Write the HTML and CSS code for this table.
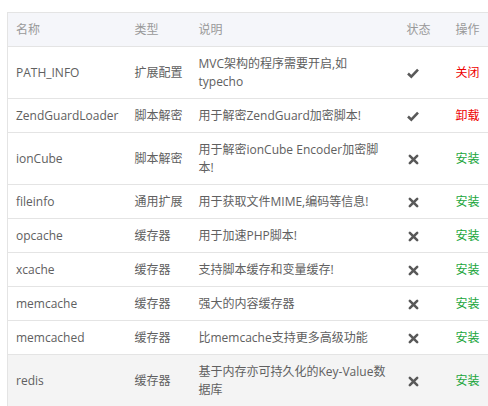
FILE: index.html
```html
<!DOCTYPE html>
<html>
<head>
<meta charset="utf-8">
<link rel="stylesheet" href="styles.css">
</head>
<body>
<div class="wrap">
<table class="tbl">
<colgroup>
<col class="c-name"><col class="c-type"><col class="c-desc"><col class="c-stat"><col class="c-op">
</colgroup>
<thead>
<tr><th>名称</th><th>类型</th><th>说明</th><th>状态</th><th>操作</th></tr>
</thead>
<tbody>
<tr><td>PATH_INFO</td><td>扩展配置</td><td>MVC架构的程序需要开启,如typecho</td><td><svg class="ico" viewBox="0 0 12 12"><path d="M1 6.5 L4.3 9.6 L11 2.6" /></svg></td><td><a class="red">关闭</a></td></tr>
<tr><td>ZendGuardLoader</td><td>脚本解密</td><td>用于解密ZendGuard加密脚本!</td><td><svg class="ico" viewBox="0 0 12 12"><path d="M1 6.5 L4.3 9.6 L11 2.6" /></svg></td><td><a class="red">卸载</a></td></tr>
<tr><td>ionCube</td><td>脚本解密</td><td>用于解密ionCube Encoder加密脚本!</td><td><svg class="ico x" viewBox="0 0 12 12"><path d="M2 2 L10 10 M10 2 L2 10" /></svg></td><td><a class="green">安装</a></td></tr>
<tr><td>fileinfo</td><td>通用扩展</td><td>用于获取文件MIME,编码等信息!</td><td><svg class="ico x" viewBox="0 0 12 12"><path d="M2 2 L10 10 M10 2 L2 10" /></svg></td><td><a class="green">安装</a></td></tr>
<tr><td>opcache</td><td>缓存器</td><td>用于加速PHP脚本!</td><td><svg class="ico x" viewBox="0 0 12 12"><path d="M2 2 L10 10 M10 2 L2 10" /></svg></td><td><a class="green">安装</a></td></tr>
<tr><td>xcache</td><td>缓存器</td><td>支持脚本缓存和变量缓存!</td><td><svg class="ico x" viewBox="0 0 12 12"><path d="M2 2 L10 10 M10 2 L2 10" /></svg></td><td><a class="green">安装</a></td></tr>
<tr><td>memcache</td><td>缓存器</td><td>强大的内容缓存器</td><td><svg class="ico x" viewBox="0 0 12 12"><path d="M2 2 L10 10 M10 2 L2 10" /></svg></td><td><a class="green">安装</a></td></tr>
<tr><td>memcached</td><td>缓存器</td><td>比memcache支持更多高级功能</td><td><svg class="ico x" viewBox="0 0 12 12"><path d="M2 2 L10 10 M10 2 L2 10" /></svg></td><td><a class="green">安装</a></td></tr>
<tr class="hover"><td>redis</td><td>缓存器</td><td>基于内存亦可持久化的Key-Value数据库</td><td><svg class="ico x" viewBox="0 0 12 12"><path d="M2 2 L10 10 M10 2 L2 10" /></svg></td><td><a class="green">安装</a></td></tr>
</tbody>
</table>
</div>
</body>
</html>
```
FILE: styles.css
```css
html, body {
  margin: 0;
  padding: 0;
  background: #fff;
  overflow: hidden;
}
.wrap {
  padding: 12px 0 0 7px;
  width: 540px;
}
.tbl {
  border-collapse: collapse;
  table-layout: fixed;
  width: 500px;
  font-family: "Open Sans", "Noto Sans CJK SC", sans-serif;
  font-size: 12px;
  line-height: 18px;
  color: #606060;
  border: 1px solid #e4e4e4;
}
.c-name { width: 119px; }
.c-type { width: 64px; }
.c-desc { width: 208px; }
.c-stat { width: 49px; }
.c-op { width: 60px; }
.tbl th {
  background: #f5f6fa;
  color: #999;
  font-weight: normal;
  text-align: left;
  padding: 8px 8px 7px;
  border-bottom: 1px solid #e4e4e4;
}
.tbl td {
  padding: 8px 8px 7px;
  border-bottom: 1px solid #e4e4e4;
  vertical-align: middle;
}
.tbl tr.hover td {
  background: #f4f4f4;
}
.ico {
  width: 12px;
  height: 12px;
  display: block;
}
.ico path {
  fill: none;
  stroke: #595959;
  stroke-width: 2.6;
  stroke-linecap: butt;
  stroke-linejoin: miter;
}
.ico.x {
  width: 11px;
  height: 11px;
  margin-left: 1px;
}
.ico.x path {
  stroke-width: 2.8;
  stroke-linecap: round;
}
.red { color: #e00; }
.green { color: #20a53a; }
```
